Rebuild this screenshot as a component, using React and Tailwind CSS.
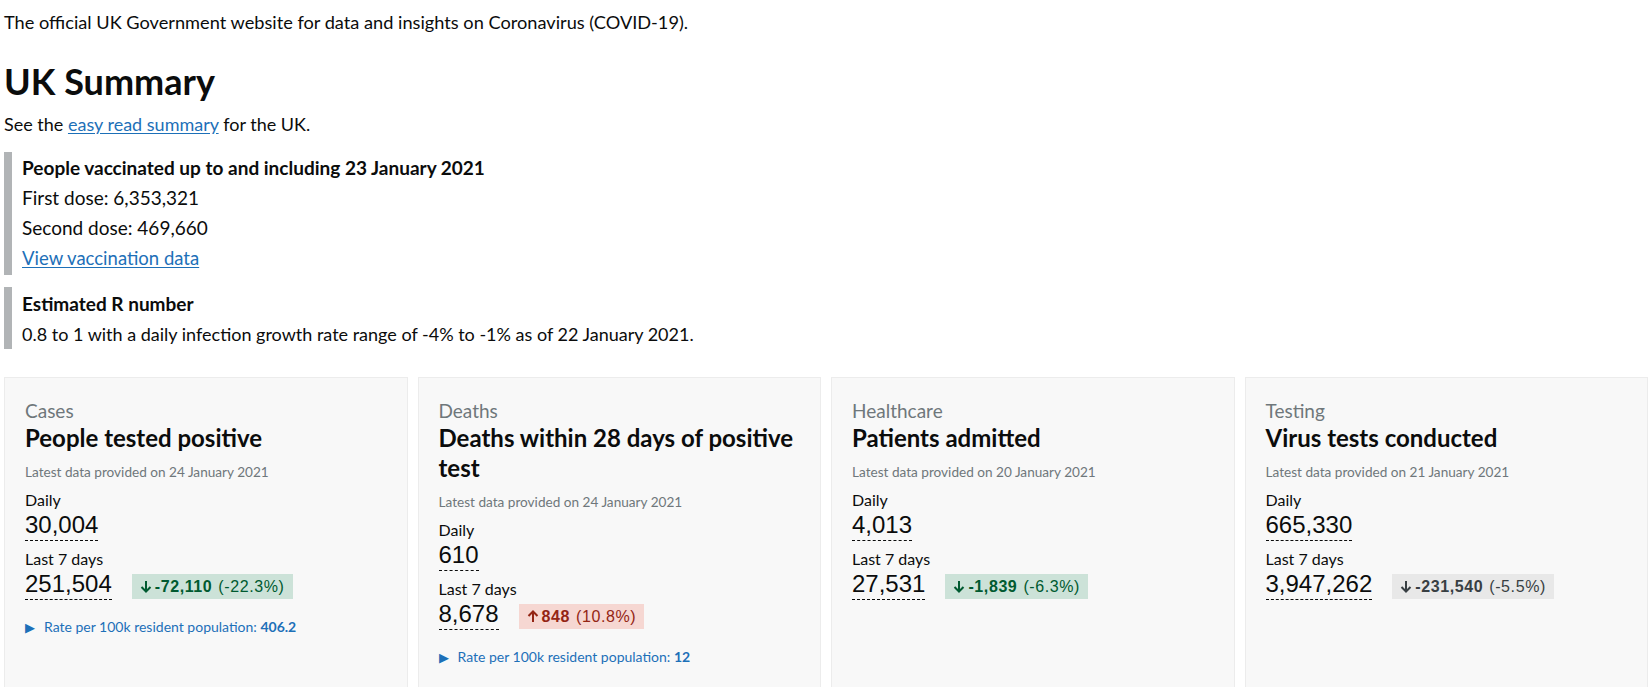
const cards = [
  {
    topic: 'Cases',
    title: 'People tested positive',
    updated: '24 January 2021',
    daily: '30,004',
    week: '251,504',
    change: { dir: 'down', tone: 'green', value: '-72,110', pct: '(-22.3%)' },
    rate: '406.2',
  },
  {
    topic: 'Deaths',
    title: 'Deaths within 28 days of positive test',
    updated: '24 January 2021',
    daily: '610',
    week: '8,678',
    change: { dir: 'up', tone: 'red', value: '848', pct: '(10.8%)' },
    rate: '12',
  },
  {
    topic: 'Healthcare',
    title: 'Patients admitted',
    updated: '20 January 2021',
    daily: '4,013',
    week: '27,531',
    change: { dir: 'down', tone: 'green', value: '-1,839', pct: '(-6.3%)' },
  },
  {
    topic: 'Testing',
    title: 'Virus tests conducted',
    updated: '21 January 2021',
    daily: '665,330',
    week: '3,947,262',
    change: { dir: 'down', tone: 'grey', value: '-231,540', pct: '(-5.5%)' },
  },
];

const tones = {
  green: 'bg-[#cce2d8] text-[#005a30]',
  red: 'bg-[#f6d7d2] text-[#942514]',
  grey: 'bg-[#e8e8e8] text-[#383f43]',
};

function Arrow({ dir }) {
  return (
    <svg width="12" height="13" viewBox="0 0 12 13" className="shrink-0">
      {dir === 'down' ? (
        <path d="M6 1v10M1.5 7l4.5 4.5L10.5 7" fill="none" stroke="currentColor" strokeWidth="2" />
      ) : (
        <path d="M6 12V2M1.5 6l4.5-4.5L10.5 6" fill="none" stroke="currentColor" strokeWidth="2" />
      )}
    </svg>
  );
}

function Change({ change }) {
  return (
    <div
      className={`flex items-center gap-[3px] h-[25px] px-[8px] mb-[1px] font-['Liberation_Sans',Arial,sans-serif] text-[16px] tracking-[0.6px] ${tones[change.tone]}`}
    >
      <Arrow dir={change.dir} />
      <b className="font-bold">{change.value}</b>
      <span className="ml-[3px]">{change.pct}</span>
    </div>
  );
}

function Figure({ label, value, change }) {
  return (
    <div className="mt-[8px]">
      <div className="text-[16px] leading-[20px] text-[#0b0c0c]">{label}</div>
      <div className="flex items-end gap-[20px]">
        <span className="font-['Liberation_Sans',Arial,sans-serif] text-[24px] leading-[30px] text-[#0b0c0c] border-b border-dashed border-[#0b0c0c]">
          {value}
        </span>
        {change && <Change change={change} />}
      </div>
    </div>
  );
}

function Card({ card }) {
  return (
    <div className="bg-[#f8f8f8] border border-[#ececec] pt-[20px] px-[20px] pb-[60px] min-h-[320px]">
      <div className="text-[19px] leading-[25px] text-[#6f777b]">{card.topic}</div>
      <h2 className="text-[24px] leading-[30px] font-bold text-[#0b0c0c]">{card.title}</h2>
      <p className="mt-[9px] text-[13.6px] leading-[20px] text-[#6f777b]">
        Latest data provided on {card.updated}
      </p>
      <Figure label="Daily" value={card.daily} />
      <Figure label="Last 7 days" value={card.week} change={card.change} />
      {card.rate && (
        <div className="mt-[17px] flex items-center gap-[9px] text-[14px] leading-[20px] text-[#1d70b8]">
          <span className="text-[13px]">▶</span>
          <span>
            Rate per 100k resident population: <b className="font-bold">{card.rate}</b>
          </span>
        </div>
      )}
    </div>
  );
}

export default function App() {
  return (
    <div className="font-['Lato',sans-serif] text-[#0b0c0c] bg-white pt-[10px] pl-[4px] h-[687px] overflow-hidden">
      <p className="text-[18.2px] leading-[25px]">
        The official UK Government website for data and insights on Coronavirus (COVID-19).
      </p>

      <h1 className="mt-[26px] text-[36px] leading-[40px] font-bold">UK Summary</h1>

      <p className="mt-[11px] text-[18px] leading-[25px]">
        See the{' '}
        <a href="#" className="text-[#1d70b8] underline underline-offset-2">
          easy read summary
        </a>{' '}
        for the UK.
      </p>

      {/* вакцинация */}
      <div className="mt-[15px] border-l-[8px] border-[#b1b4b6] pl-[10px] pt-[1px] pb-[2px] text-[19px] leading-[30px]">
        <p className="font-bold h-[30px]">People vaccinated up to and including 23 January 2021</p>
        <p className="h-[30px]">First dose: 6,353,321</p>
        <p className="h-[30px]">Second dose: 469,660</p>
        <a href="#" className="block h-[30px] text-[18.5px] text-[#1d70b8] underline underline-offset-2">
          View vaccination data
        </a>
      </div>

      {/* R number */}
      <div className="mt-[12px] border-l-[8px] border-[#b1b4b6] pl-[10px] pt-[2px] text-[18px] leading-[30px]">
        <p className="font-bold text-[19px] h-[30px]">Estimated R number</p>
        <p className="h-[30px]">0.8 to 1 with a daily infection growth rate range of -4% to -1% as of 22 January 2021.</p>
      </div>

      {/* карточки */}
      <div className="mt-[28px] grid grid-cols-4 gap-[10px]">
        {cards.map((card) => (
          <Card key={card.topic} card={card} />
        ))}
      </div>
    </div>
  );
}
